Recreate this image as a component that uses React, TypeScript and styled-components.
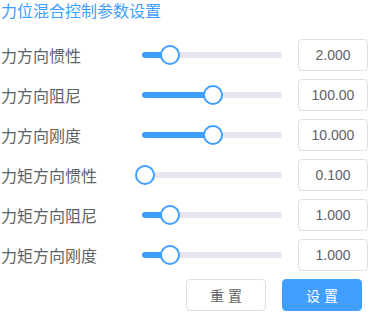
import React from "react";
import styled, { createGlobalStyle } from "styled-components";

const Global = createGlobalStyle`
  html, body { margin: 0; padding: 0; background: #ffffff; }
  body { font-family: "Liberation Sans", "Noto Sans CJK SC", sans-serif; }
`;

const Panel = styled.div`
  width: 369px;
  height: 315px;
  box-sizing: border-box;
  padding: 0 0 0 1px;
  display: flex;
  flex-direction: column;
  overflow: hidden;
`;

const Title = styled.div`
  font-size: 16px;
  line-height: 20px;
  color: #409eff;
  font-family: "Noto Sans CJK SC", sans-serif;
  white-space: nowrap;
`;

const Rows = styled.div`
  margin-top: 19px;
  display: flex;
  flex-direction: column;
  gap: 8px;
`;

const Row = styled.div`
  display: grid;
  grid-template-columns: 141px 156px 70px;
  align-items: center;
  height: 32px;
`;

const Label = styled.div`
  font-family: "Noto Sans CJK SC", sans-serif;
  font-size: 16px;
  line-height: 20px;
  color: #606266;
  white-space: nowrap;
`;

const Track = styled.div`
  position: relative;
  height: 6px;
  margin-right: 16px;
  border-radius: 3px;
  background: #e4e7ed;
`;

const Fill = styled.div`
  height: 100%;
  border-radius: 3px;
  background: #409eff;
`;

const Thumb = styled.div`
  position: absolute;
  top: 50%;
  width: 20px;
  height: 20px;
  box-sizing: border-box;
  border: 2px solid #409eff;
  border-radius: 50%;
  background: #ffffff;
  transform: translate(-50%, -50%);
`;

const NumberBox = styled.input`
  width: 70px;
  height: 32px;
  box-sizing: border-box;
  border: 1px solid #dcdfe6;
  border-radius: 4px;
  text-align: center;
  font-family: "Liberation Sans", sans-serif;
  font-size: 14px;
  color: #606266;
  background: #fff;
  padding: 0;
  outline: none;
`;

const Actions = styled.div`
  margin-top: 8px;
  display: flex;
  justify-content: flex-end;
  gap: 16px;
  padding-right: 7px;
`;

const Button = styled.button<{ $primary?: boolean }>`
  width: 80px;
  height: 32px;
  box-sizing: border-box;
  border-radius: 4px;
  border: 1px solid ${(p) => (p.$primary ? "#409eff" : "#dcdfe6")};
  background: ${(p) => (p.$primary ? "#409eff" : "#ffffff")};
  color: ${(p) => (p.$primary ? "#ffffff" : "#606266")};
  font-family: "Noto Sans CJK SC", sans-serif;
  font-size: 14px;
  letter-spacing: 4px;
  padding: 0 0 0 4px;
  cursor: pointer;
`;

const params = [
  { label: "力方向惯性", value: "2.000", pct: 20 },
  { label: "力方向阻尼", value: "100.00", pct: 50.5 },
  { label: "力方向刚度", value: "10.000", pct: 50.5 },
  { label: "力矩方向惯性", value: "0.100", pct: 2 },
  { label: "力矩方向阻尼", value: "1.000", pct: 20 },
  { label: "力矩方向刚度", value: "1.000", pct: 20 },
];

function Slider({ pct }: { pct: number }) {
  return (
    <Track>
      <Fill style={{ width: `${pct}%` }} />
      <Thumb style={{ left: `${pct}%` }} />
    </Track>
  );
}

export default function App() {
  return (
    <>
      <Global />
      <Panel>
        <Title>力位混合控制参数设置</Title>
        <Rows>
          {params.map((p) => (
            <Row key={p.label}>
              <Label>{p.label}</Label>
              <Slider pct={p.pct} />
              <NumberBox readOnly value={p.value} />
            </Row>
          ))}
        </Rows>
        <Actions>
          <Button>重置</Button>
          <Button $primary>设置</Button>
        </Actions>
      </Panel>
    </>
  );
}
